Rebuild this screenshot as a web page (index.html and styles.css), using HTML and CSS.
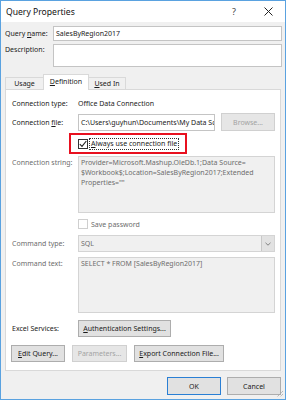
FILE: index.html
```html
<!DOCTYPE html>
<html lang="en">
<head>
    <meta charset="UTF-8" />
    <title>Query Properties</title>
    <link rel="stylesheet" href="styles.css">
</head>
<body>
    <div class="window">
        <!-- Title bar -->
        <div class="titlebar">
            <span class="title">Query Properties</span>
            <span class="ctl help">?</span>
            <span class="ctl">
                <svg width="9" height="9" viewBox="0 0 9 9"><path d="M0.5 0.5L8.5 8.5M8.5 0.5L0.5 8.5" stroke="#222" stroke-width="1" fill="none"/></svg>
            </span>
        </div>

        <!-- Name and description -->
        <div class="top">
            <span class="top-label"><span>Query <u>n</u>ame:</span></span>
            <div class="field name-field">SalesByRegion2017</div>
            <span class="top-label desc-label">Description:</span>
            <div class="field desc-field"></div>
        </div>

        <!-- Tabs -->
        <div class="tabs">
            <div class="tab tab-usage">Usage</div>
            <div class="tab tab-active"><span><u>D</u>efinition</span></div>
            <div class="tab tab-used"><span><u>U</u>sed In</span></div>
        </div>

        <div class="panel">
            <div class="row row-type">
                <span class="lbl">Connection type:</span>
                <span>Office Data Connection</span>
            </div>

            <div class="row row-file">
                <span class="lbl">Connection <u>f</u>ile:</span>
                <div class="field file-field">C:\Users\guyhun\Documents\My Data Sc</div>
                <div class="btn btn-disabled browse">Browse...</div>
            </div>

            <div class="row row-always">
                <span class="lbl"></span>
                <div class="highlight">
                    <span class="check checked">
                        <svg width="8" height="8" viewBox="0 0 8 8"><path d="M0.8 4.2L3 6.4L7.3 1" stroke="#222" stroke-width="1.1" fill="none"/></svg>
                    </span>
                    <span class="focus"><u>A</u>lways use connection file</span>
                </div>
            </div>

            <div class="row row-top row-conn">
                <span class="lbl lbl-off">Connection string:</span>
                <div class="field field-off conn-field">Provider=Microsoft.Mashup.OleDb.1;Data Source=<br>$Workbook$;Location=SalesByRegion2017;Extended<br>Properties=""</div>
            </div>

            <div class="row row-save">
                <span class="lbl"></span>
                <span class="check check-off"></span>
                <span class="save-text">Save password</span>
            </div>

            <div class="row row-cmdtype">
                <span class="lbl lbl-off">Command type:</span>
                <div class="field field-off select">
                    <span class="select-text">SQL</span>
                    <span class="arrow">
                        <svg width="6" height="4" viewBox="0 0 6 4"><path d="M0.5 0.8L3 3.2L5.5 0.8" stroke="#777" stroke-width="0.9" fill="none"/></svg>
                    </span>
                </div>
            </div>

            <div class="row row-top row-cmdtext">
                <span class="lbl lbl-off">Command text:</span>
                <div class="field field-off cmd-field">SELECT * FROM [SalesByRegion2017]</div>
            </div>

            <div class="row row-excel">
                <span class="lbl">Excel Services:</span>
                <div class="btn auth-btn"><span><u>A</u>uthentication Settings...</span></div>
            </div>

            <div class="row row-buttons">
                <div class="btn edit-btn"><span><u>E</u>dit Query...</span></div>
                <div class="btn btn-disabled param-btn">Parameters...</div>
                <div class="btn export-btn"><span><u>E</u>xport Connection File...</span></div>
            </div>
        </div>

        <div class="footer">
            <div class="btn btn-default">OK</div>
            <div class="btn">Cancel</div>
        </div>

        <svg class="grip" width="8" height="8" viewBox="0 0 8 8">
            <path d="M7 1L1 7M7 4L4 7" stroke="#a0a0a0" stroke-width="1" stroke-dasharray="1 1" fill="none"/>
        </svg>
    </div>
</body>
</html>
```

FILE: styles.css
```css
body {
    margin: 0;
    padding: 0;
    background: #ffffff;
}

.window {
    position: relative;
    width: 286px;
    height: 400px;
    box-sizing: border-box;
    border: 1px solid #5aa2e0;
    background: #f0f0f0;
    display: flex;
    flex-direction: column;
    font-family: "Noto Sans", "Open Sans", sans-serif;
    font-size: 7px;
    color: #1a1a1a;
    overflow: hidden;
}

u {
    text-decoration-thickness: 0.5px;
    text-underline-offset: 1px;
}

/* Title bar */
.titlebar {
    height: 21px;
    background: #ffffff;
    display: flex;
    align-items: center;
    padding-left: 5px;
    flex: none;
}

.title {
    font-size: 8.6px;
    color: #111;
}

.ctl {
    width: 34px;
    display: flex;
    justify-content: center;
    align-items: center;
}

.help {
    margin-left: auto;
    font-size: 9px;
    color: #444;
}

/* Name and description */
.top {
    display: grid;
    grid-template-columns: 48px 1fr;
    row-gap: 3px;
    padding: 4px 3px 0 4px;
    flex: none;
}

.top-label {
    display: flex;
    align-items: center;
}

.desc-label {
    align-items: flex-start;
    padding-top: 1px;
}

.field {
    box-sizing: border-box;
    background: #ffffff;
    border: 1px solid #c4c4c4;
    padding: 0 2px;
    white-space: nowrap;
    overflow: hidden;
}

.name-field {
    height: 15px;
    line-height: 13px;
}

.desc-field {
    height: 23px;
}

/* Tabs */
.tabs {
    display: flex;
    align-items: flex-end;
    height: 15px;
    margin: 7px 0 0 4px;
    flex: none;
}

.tab {
    box-sizing: border-box;
    height: 12px;
    border: 1px solid #d9d9d9;
    border-bottom: none;
    display: flex;
    align-items: center;
    justify-content: center;
    background: #f0f0f0;
}

.tab-usage {
    width: 38px;
    border-right: none;
}

.tab-active {
    position: relative;
    z-index: 1;
    width: 46px;
    height: 16px;
    margin-bottom: -1px;
    background: #ffffff;
    padding-bottom: 2px;
}

.tab-used {
    width: 37px;
    border-left: none;
}

/* Panel */
.panel {
    box-sizing: border-box;
    height: 282px;
    margin: 0 4px 0 4px;
    border: 1px solid #d9d9d9;
    background: #ffffff;
    padding: 7px 5px 0 6px;
    flex: none;
}

.row {
    display: flex;
    align-items: center;
}

.row-top {
    align-items: flex-start;
}

.lbl {
    width: 66px;
    flex: none;
}

.lbl-off {
    color: #6d6d6d;
}

.row-top .lbl {
    padding-top: 2px;
}

.row-type {
    height: 12px;
}

.row-file {
    margin-top: 4px;
}

.file-field {
    width: 137px;
    height: 17px;
    line-height: 15px;
}

.btn {
    box-sizing: border-box;
    height: 17px;
    background: #e1e1e1;
    border: 1px solid #adadad;
    display: flex;
    align-items: center;
    justify-content: center;
    white-space: nowrap;
    color: #1a1a1a;
}

.btn-disabled {
    background: #e6e6e6;
    border-color: #d0d0d0;
    color: #a3a3a3;
}

.browse {
    width: 54px;
    height: 18px;
    margin-left: auto;
}

/* Highlighted checkbox */
.row-always {
    margin-top: 2px;
}

.highlight {
    box-sizing: border-box;
    width: 118px;
    height: 21px;
    margin-left: -9px;
    border: 2px solid #e8101f;
    display: flex;
    align-items: center;
    padding-left: 7px;
}

.check {
    box-sizing: border-box;
    width: 10px;
    height: 10px;
    border: 1px solid #333;
    background: #ffffff;
    display: flex;
    align-items: center;
    justify-content: center;
    flex: none;
}

.check-off {
    border-color: #cfcfcf;
}

.focus {
    margin-left: 1px;
    border: 1px dotted #333;
    padding: 0 1px;
    line-height: 10px;
}

.row-conn {
    margin-top: 2px;
}

.field-off {
    background: #f0f0f0;
    border-color: #d4d4d4;
    color: #6d6d6d;
}

.conn-field {
    flex: 1;
    height: 57px;
    white-space: normal;
    line-height: 10px;
    padding-top: 1px;
}

.row-save {
    margin-top: 6px;
}

.save-text {
    margin-left: 3px;
    color: #6d6d6d;
}

.row-cmdtype {
    margin-top: 6px;
}

.select {
    flex: 1;
    height: 17px;
    display: flex;
    align-items: center;
    padding-right: 0;
}

.select-text {
    flex: 1;
}

.arrow {
    box-sizing: border-box;
    width: 13px;
    height: 15px;
    background: #e2e2e2;
    border-left: 1px solid #c8c8c8;
    display: flex;
    align-items: center;
    justify-content: center;
}

.row-cmdtext {
    margin-top: 5px;
}

.cmd-field {
    flex: 1;
    height: 56px;
    line-height: 10px;
    padding-top: 1px;
}

.row-excel {
    margin-top: 7px;
}

.auth-btn {
    width: 93px;
}

.row-buttons {
    margin-top: 8px;
    margin-left: -1px;
    gap: 7px;
}

.edit-btn {
    width: 54px;
}

.param-btn {
    width: 55px;
}

.export-btn {
    width: 90px;
}

/* Footer */
.footer {
    display: flex;
    justify-content: flex-end;
    gap: 6px;
    margin-top: 6px;
    padding-right: 4px;
}

.footer .btn {
    width: 54px;
    height: 18px;
}

.btn-default {
    border-color: #2a7fd4;
}

.grip {
    position: absolute;
    right: 1px;
    bottom: 1px;
}
```
